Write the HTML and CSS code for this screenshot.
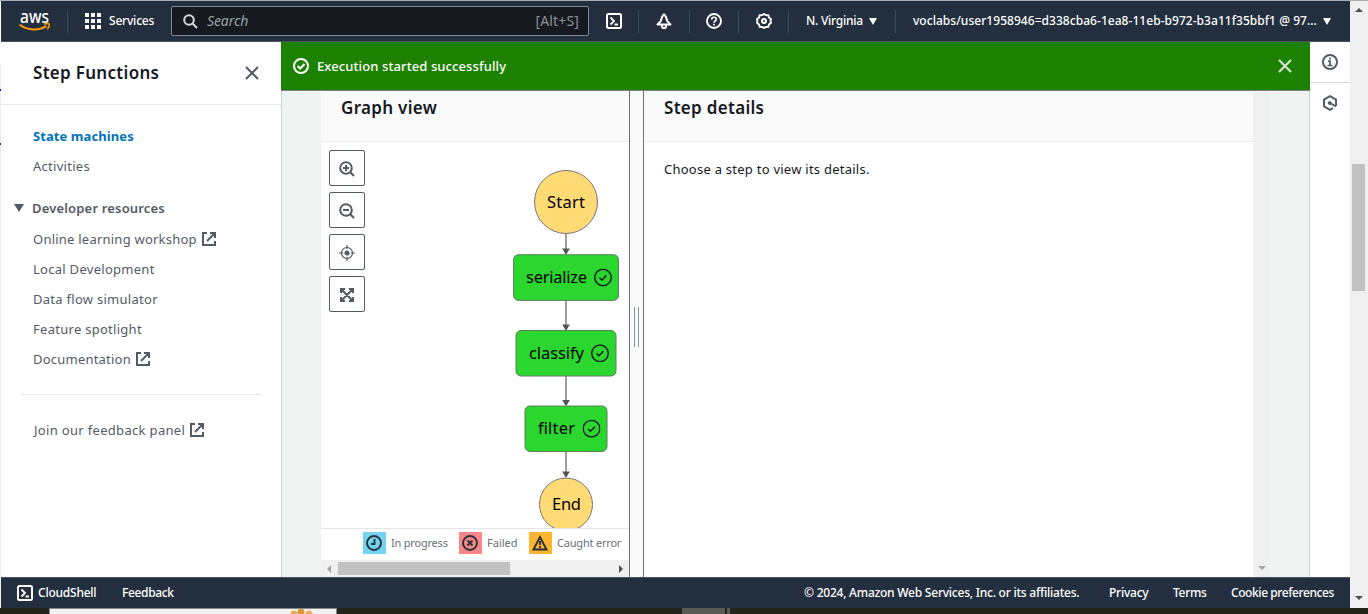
FILE: index.html
```html
<!DOCTYPE html>
<html lang="en">
<head>
<meta charset="utf-8">
<title>Step Functions</title>
<link rel="stylesheet" href="styles.css">
</head>
<body>
<svg class="defs" width="0" height="0" aria-hidden="true">
  <symbol id="external" viewBox="0 0 14 14"><path d="M5 1H1v12h12V9M8 1h5v5M13 1L5 9" fill="none" stroke="currentColor" stroke-width="2"/></symbol>
  <symbol id="shell" viewBox="0 0 16 16"><rect x="1" y="1" width="14" height="14" rx="1.5" fill="none" stroke="currentColor" stroke-width="2"/><path d="M4.500 4.500L8 8l-3.500 3.500M8.500 11.500H12" fill="none" stroke="currentColor" stroke-width="1.800"/></symbol>
  <symbol id="close" viewBox="0 0 14 14"><path d="M1 1l12 12M13 1L1 13" fill="none" stroke="currentColor" stroke-width="2"/></symbol>
  <symbol id="check" viewBox="0 0 18 18"><circle cx="9" cy="9" r="8.300" fill="none" stroke="currentColor" stroke-width="1.400"/><path d="M5.500 9.200l2.500 2.300 4.300-4.500" fill="none" stroke="currentColor" stroke-width="1.400"/></symbol>
</svg>
<div class="screen">
  <div class="edge"><i></i><i></i></div>
  <div class="app">
    <header class="topbar">
      <svg class="logo" width="32" height="24" viewBox="0 0 32 24"><text x="1" y="14" textLength="29" lengthAdjust="spacingAndGlyphs">aws</text><path d="M.5 15.700C9 21.700 20 21.700 27.500 17.200" fill="none" stroke="#f90" stroke-width="2"/><path d="M25 15.400c2-1 4.500-1 5.300-.4.300 1.400-.5 3.700-2 5.200" fill="none" stroke="#f90" stroke-width="1.500"/></svg>
      <i class="sep s1"></i>
      <svg class="grid" width="16" height="16" fill="#fff"><path d="M0 0h4v4H0zM6 0h4v4H6zM12 0h4v4h-4zM0 6h4v4H0zM6 6h4v4H6zM12 6h4v4h-4zM0 12h4v4H0zM6 12h4v4H6zM12 12h4v4h-4z"/></svg>
      <span class="services">Services</span>
      <div class="search">
        <svg width="15" height="15" viewBox="0 0 15 15" fill="none" stroke="#d5dbdb" stroke-width="2"><circle cx="6" cy="6" r="4.800"/><path d="M9.500 9.500l4.500 4.500"/></svg>
        <span class="ph">Search</span><span class="key">[Alt+S]</span>
      </div>
      <svg class="shell" width="16" height="16"><use href="#shell"/></svg>
      <i class="sep"></i>
      <svg class="tool" width="16" height="16" viewBox="0 0 16 16" fill="none" stroke="#fff" stroke-width="1.900"><path d="M8 1.200C5.800 3 5.300 5.500 4.800 8L1.500 11.500h13L11.200 8C10.700 5.500 10.200 3 8 1.200z" stroke-linejoin="round"/><path d="M6 12v1.500a2 1.700 0 0 0 4 0V12"/></svg>
      <i class="sep s2"></i>
      <svg class="tool" width="16" height="16" viewBox="0 0 16 16" fill="none" stroke="#fff" stroke-width="1.900"><circle cx="8" cy="8" r="7"/><path d="M5.700 6.500c0-3 4.600-3 4.600 0 0 1.500-2.300 1.500-2.300 3.300M8 10.800v1.700" stroke-width="1.700"/></svg>
      <i class="sep s3"></i>
      <svg class="tool" width="16" height="16" viewBox="0 0 16 16" fill="none" stroke="#fff"><path d="M6.300 2L8 1l1.700 1 2.600.2.600 2.300L15 6.200 14.500 8l.5 1.800-2.100 1.700-.6 2.300-2.600.2L8 15l-1.700-1-2.600-.2-.6-2.300L1 9.800 1.500 8 1 6.200l2.100-1.700.6-2.300z" stroke-width="1.900"/><circle cx="8" cy="8" r="2" stroke-width="2"/></svg>
      <i class="sep s4"></i>
      <span class="region">N. Virginia</span><i class="caret"></i>
      <i class="sep s5"></i>
      <span class="account">voclabs/user1958946=d338cba6-1ea8-11eb-b972-b3a11f35bbf1 @ 97...</span><i class="caret"></i>
    </header>
    <div class="body">
      <nav class="side">
        <div class="side-head"><h2>Step Functions</h2><svg width="14" height="14"><use href="#close"/></svg></div>
        <div class="links">
          <a class="active">State machines</a>
          <a class="l2">Activities</a>
          <a class="group"><i class="caret"></i><b>Developer resources</b></a>
          <a class="l4">Online learning workshop<svg width="14" height="14"><use href="#external"/></svg></a>
          <a class="l5">Local Development</a>
          <a class="l6">Data flow simulator</a>
          <a class="l7">Feature spotlight</a>
          <a class="l8">Documentation<svg width="14" height="14"><use href="#external"/></svg></a>
          <hr>
          <a class="l9">Join our feedback panel<svg width="14" height="14"><use href="#external"/></svg></a>
        </div>
      </nav>
      <main>
        <div class="flash"><svg width="16" height="16" viewBox="0 0 16 16" fill="none" stroke="#fff" stroke-width="2"><circle cx="8" cy="8" r="7"/><path d="M4.500 8l2.700 2.500 4.300-4.500"/></svg><span>Execution started successfully</span><svg class="x" width="14" height="14"><use href="#close"/></svg></div>
        <div class="panels">
          <section class="graph">
            <div class="head"><h3>Graph view</h3></div>
            <div class="canvas">
              <div class="zoom">
                <button><svg width="16" height="16" viewBox="0 0 16 16"><circle cx="7" cy="7" r="5.800"/><path d="M11 11l4 4M4 7h6M7 4v6"/></svg></button>
                <button><svg width="16" height="16" viewBox="0 0 16 16"><circle cx="7" cy="7" r="5.800"/><path d="M11 11l4 4M4 7h6"/></svg></button>
                <button><svg class="thin" width="16" height="16" viewBox="0 0 16 16"><circle cx="8" cy="8" r="5.500"/><circle cx="8" cy="8" r="2" fill="#545b64"/><path d="M8 0v4M8 12v4M0 8h4M12 8h4"/></svg></button>
                <button><svg width="16" height="16" viewBox="0 0 16 16"><path d="M2 6V2h4M10 2h4v4M14 10v4h-4M6 14H2v-4M2 2l12 12M14 2L2 14"/><path class="solid" d="M1 1h5L1 6zM15 1v5l-5-5zM15 15h-5l5-5zM1 15v-5l5 5z"/></svg></button>
              </div>
              <svg class="flow" width="248" height="386" viewBox="381 142 248 386">
                <g class="edges"><path d="M566 234v18M566 300v28M566 376v28M566 452v23"/></g>
                <path class="tips" d="M562.200 248.500h7.600L566 255zM562.200 324.500h7.600L566 331zM562.200 400h7.600L566 406.500zM562.200 471.500h7.600L566 478z"/>
                <g class="terminal"><circle cx="566" cy="202" r="31.500"/><circle cx="566" cy="504.500" r="26.500"/></g>
                <g class="steps"><rect x="513.500" y="254.700" width="105" height="45.700" rx="5"/><rect x="516" y="330.500" width="100" height="45.500" rx="5"/><rect x="525" y="406" width="82" height="45.500" rx="5"/></g>
                <text x="547" y="208" textLength="38">Start</text>
                <text x="526" y="283" textLength="61">serialize</text>
                <text x="529" y="359" textLength="55">classify</text>
                <text x="538" y="434" textLength="37">filter</text>
                <text x="552" y="510" textLength="29">End</text>
                <use href="#check" x="594" y="268.500" width="18" height="18"/><use href="#check" x="591" y="344.300" width="18" height="18"/><use href="#check" x="582.500" y="419.700" width="18" height="18"/>
              </svg>
            </div>
            <div class="legend">
              <span class="chip blue"><svg width="17" height="16" viewBox="0 0 17 16"><circle cx="8" cy="8" r="7"/><path d="M8.500 4v5H5"/></svg></span><span class="g1">In progress</span>
              <span class="chip red"><svg width="17" height="16" viewBox="0 0 17 16"><circle cx="8" cy="8" r="7"/><path d="M5.500 5.500l5 5M10.500 5.500l-5 5"/></svg></span><span class="g2">Failed</span>
              <span class="chip amber"><svg width="17" height="16" viewBox="0 0 17 16"><path d="M8 2L1.500 14.500h13zM8 6v4M8 11v2"/></svg></span><span class="g3">Caught error</span>
            </div>
            <div class="hscroll"><i class="left"></i><i class="thumb"></i><i class="right"></i></div>
          </section>
          <div class="splitter"><i></i></div>
          <section class="details"><div class="head"><h3>Step details</h3></div><p>Choose a step to view its details.</p></section>
          <div class="vscroll"><i class="down"></i></div>
        </div>
      </main>
      <aside class="tools">
        <div class="info"><svg width="16" height="16" viewBox="0 0 16 16" fill="none" stroke="#545b64" stroke-width="2"><circle cx="8" cy="8" r="7"/><path d="M8 3.500v2M6 7.200h2v4M5.500 11.500h5" stroke-width="1.700"/></svg></div>
        <div class="hex"><svg width="16" height="16" viewBox="0 0 16 16" fill="none" stroke="#545b64" stroke-width="2"><path d="M14 11V4.500L8 1.200 2 4.500v7L8 14.800l3-1.700M8 8l6 3.500"/><circle cx="7.700" cy="8" r="1.500" fill="#545b64" stroke-width="1"/></svg></div>
      </aside>
    </div>
    <footer>
      <svg width="16" height="16"><use href="#shell"/></svg>
      <span class="f1">CloudShell</span><span class="f2">Feedback</span>
      <span class="f3">© 2024, Amazon Web Services, Inc. or its affiliates.</span><span class="f4">Privacy</span><span class="f5">Terms</span><span class="f6">Cookie preferences</span>
    </footer>
  </div>
  <div class="pagescroll"><i class="up"></i><i class="thumb"></i><i class="down"></i></div>
</div>
<div class="taskbar"><div class="peek"><i></i></div><div class="tab"></div><div class="tab2"></div></div>
</body>
</html>
```
FILE: styles.css
```css
* { box-sizing: border-box; }
body { margin: 0; width: 1368px; height: 614px; overflow: hidden; font: 13px/20px "Noto Sans", "Open Sans", sans-serif; color: #16191f; background: #fff; }
i { display: block; font-style: normal; }
h2, h3, p { margin: 0; }
svg { display: block; flex: none; }
span, a, b, h2, h3, p { white-space: nowrap; }
.defs { position: absolute; }
.screen { display: flex; height: 608px; border-top: 1px solid #a9acaf; }
.edge { width: 1px; background: linear-gradient(#fff 64px, #eee 64px); padding-top: 88px; }
.edge i { height: 2px; margin-bottom: 52px; background: #1c1cf0; }
.app { width: 1349px; display: flex; flex-direction: column; }
.caret { border: 4px solid transparent; border-top: 7px solid currentColor; border-bottom: 0; flex: none; }

.topbar { height: 41px; display: flex; align-items: center; background: #232f3e; border-bottom: 1px solid #4a545f; color: #fff; font-size: 12px; font-weight: 500; flex: none; }
.topbar span { flex: none; }
.logo { margin-left: 18px; overflow: visible; }
.logo text { font-size: 18px; font-weight: 500; fill: #fff; }
.sep { width: 1px; height: 23px; background: #414d5c; margin: 0 17px 0 16px; flex: none; }
.s1 { margin: 0 17px 0 16px; }
.services { width: 62px; padding-left: 8px; letter-spacing: -.2px; }
.search { width: 418px; height: 30px; margin: 0 17px 0 8px; display: flex; align-items: center; padding: 0 9px 0 11px; border: 1px solid #7d8790; border-radius: 2px; background: #161920; }
.ph { margin-left: 9px; font-size: 14px; font-style: italic; font-weight: 400; color: #95a5a6; letter-spacing: -.1px; }
.key { margin-left: auto; font-size: 14px; font-weight: 400; color: #879596; letter-spacing: .15px; }
.s2 { margin: 0 16px 0 17px; }
.s3 { margin-left: 16px; }
.s4 { margin-right: 17px; }
.region { width: 63px; letter-spacing: -.25px; }
.s5 { margin: 0 17px 0 18px; }
.account { width: 410px; letter-spacing: .04px; }

.body { display: flex; height: 535px; }
.side { width: 281px; border-right: 1px solid #ccd1d1; color: #545b64; }
.side-head { height: 63px; padding: 0 22px 0 32px; display: flex; align-items: center; justify-content: space-between; border-bottom: 1px solid #e6e9e9; }
h2, h3 { font-size: 17px; font-weight: 600; color: #16191f; letter-spacing: .3px; }
.links { padding-top: 21px; }
.links a { display: flex; align-items: center; height: 20px; padding-left: 32px; margin-bottom: 10px; letter-spacing: .28px; }
.links a svg { margin-left: 5px; }
.links .active { color: #0073bb; font-weight: 700; letter-spacing: .08px; }
.links .l2 { margin-bottom: 22px; }
.links .group { padding-left: 13px; margin-bottom: 11px; letter-spacing: .17px; }
.links .l4 { letter-spacing: .23px; }
.links .l8 { letter-spacing: .22px; }
.links .l9 { padding-left: 33px; letter-spacing: .32px; }
.group .caret { border-width: 8px 5.500px 0; margin-right: 8px; }
.links b { font-weight: 600; }
hr { margin: 25px 20px 25px; border: 0; border-top: 1px solid #e6e9e9; height: 0; }

main { width: 1028px; display: flex; flex-direction: column; background: #f1f3f3; }
.flash { height: 49px; display: flex; align-items: center; padding: 0 18px 0 12px; margin-left: -1px; position: relative; z-index: 1; background: #1d8102; color: #fff; border-bottom: 1px solid #7b827c; font-weight: 500; flex: none; }
.flash span { margin-left: 8px; letter-spacing: .1px; }
.flash .x { margin-left: auto; color: #dfe8dd; }
.panels { display: flex; height: 486px; padding-left: 39px; }
.graph { width: 308px; background: #fff; }
.head { height: 51px; padding: 7px 20px; background: #fafafa; border-bottom: 1px solid #eaeded; }
.canvas { height: 386px; display: flex; padding-left: 8px; }
.zoom { width: 52px; padding-top: 8px; display: flex; flex-direction: column; gap: 6px; }
.zoom button { width: 36px; height: 36px; padding: 1px 0 0; display: grid; place-items: center; background: #fff; border: 1px solid #545b64; border-radius: 2px; }
.zoom svg { fill: none; stroke: #545b64; stroke-width: 2; }
.zoom .thin { stroke-width: 1.200; }
.zoom .solid { fill: #545b64; stroke: none; }
.flow { font-size: 16.500px; }
.edges { stroke: #808080; stroke-width: 1.500; }
.tips { fill: #545454; }
.terminal { fill: #ffda75; stroke: #777; }
.steps { fill: #2bd62e; stroke: #5f7d60; }
.legend { height: 32px; display: flex; align-items: center; padding: 0 0 4px 42px; border-top: 1px solid #e4e6e6; font-size: 11px; color: #687078; letter-spacing: -.2px; }
.chip { width: 23px; height: 22px; display: grid; place-items: center; margin-right: 5px; flex: none; }
.chip svg { fill: none; stroke: #263238; stroke-width: 1.900; }
.blue { background: #75d3f2; } .red { background: #f98787; } .amber { background: #ffb532; }
.g1 { width: 68px; } .g2 { width: 42px; letter-spacing: 0; }
.hscroll { height: 17px; background: #f0f0f0; display: flex; align-items: center; padding: 0 6px; }
.left, .right { border: 4px solid transparent; }
.left { border-right: 4px solid #a3a3a3; border-left: 0; margin-right: 7px; }
.hscroll .thumb { width: 172px; height: 13px; background: #c1c1c1; }
.right { border-left: 4px solid #505050; border-right: 0; margin-left: auto; }
.splitter { width: 15px; border: 1px solid #687078; border-width: 0 1px; background: #fafafa; display: grid; place-items: start center; padding-top: 216px; }
.splitter i { width: 5px; height: 40px; border: 1px solid #879596; border-width: 0 1px; }
.details { width: 609px; background: #fff; }
.details p { padding: 17px 20px; letter-spacing: .25px; }
.vscroll { width: 17px; background: #f0f0f0; display: flex; align-items: end; justify-content: center; padding-bottom: 7px; }
.down, .up { border: 4px solid transparent; }
.down { border-top: 4px solid #505050; border-bottom: 0; }
.up { border-bottom: 4px solid #505050; border-top: 0; }
.vscroll .down { border-top-color: #a3a3a3; }

.tools { width: 40px; background: #fff; }
.tools { box-shadow: -1px 0 #ccd1d1; clip-path: inset(0 0 0 -1px); }
.tools div { display: grid; place-items: center; height: 41px; }
.tools .hex { height: 39px; }
.info { border-bottom: 1px solid #d5dbdb; }

footer { height: 31px; display: flex; align-items: center; padding-left: 16px; background: #232f3e; border-top: 1px solid #4a545f; color: #fff; font-size: 12px; font-weight: 500; letter-spacing: -.23px; }
footer span { flex: none; }
.f1 { width: 89px; padding-left: 5px; } .f2 { width: 682px; letter-spacing: -.35px; } .f3 { width: 305px; } .f4 { width: 64px; } .f5 { width: 58px; }
.f5 { letter-spacing: -.3px; }
.f6 { letter-spacing: -.42px; }
.pagescroll { width: 18px; background: #f0f0f0; display: flex; flex-direction: column; align-items: center; padding-top: 7px; padding-right: 1px; }
.pagescroll .thumb { width: 13px; height: 127px; margin: 152px 0 305px; background: #c1c1c1; }
.taskbar { height: 6px; background: #24251a; display: flex; padding-left: 49px; }
.peek { width: 288px; background: #f2f2f2; border: 1px solid #888; border-bottom: 0; padding-left: 239px; }
.peek i { width: 25px; height: 5px; background: radial-gradient(circle at 5px 5px, #e8ae52 3px, transparent 4px), radial-gradient(circle at 12px 3px, #d99a3a 3px, transparent 4px), radial-gradient(circle at 20px 5px, #e8ae52 3px, transparent 4px); }
.tab { width: 43px; margin-left: 345px; background: #5a5a54; }
.tab2 { width: 3px; margin-left: 2px; background: #5a5a54; }
```
